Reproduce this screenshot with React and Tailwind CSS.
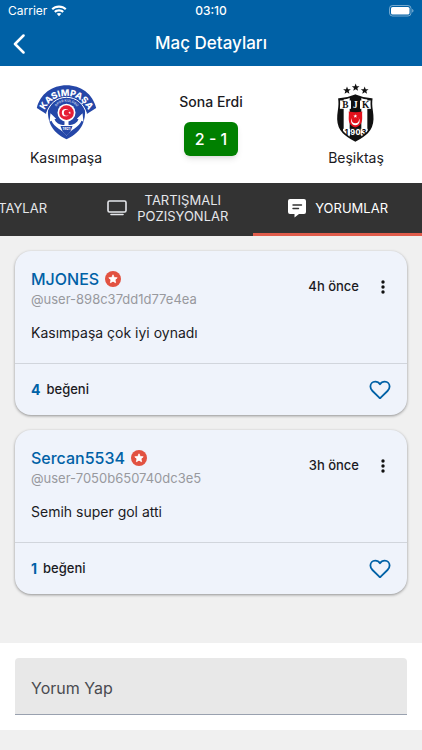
import React, { useState } from "react";

const comments = [
  {
    id: 1,
    name: "MJONES",
    handle: "@user-898c37dd1d77e4ea",
    time: "4h önce",
    text: "Kasımpaşa çok iyi oynadı",
    likes: 4,
  },
  {
    id: 2,
    name: "Sercan5534",
    handle: "@user-7050b650740dc3e5",
    time: "3h önce",
    text: "Semih super gol atti",
    likes: 1,
  },
];

const WifiIcon = () => (
  <svg viewBox="0 0 16 12" className="h-3 w-4" fill="white" aria-hidden="true">
    <path d="M8 0.6C5 .6 2.4 1.7.5 3.5l1.5 1.6C3.600 3.600 5.700 2.800 8 2.800s4.400.800 6 2.300l1.500-1.600C13.600 1.700 11 .6 8 .6z" />
    <path d="M8 4.300c-1.900 0-3.600.7-4.900 1.900l1.500 1.600C5.500 7 6.700 6.500 8 6.500s2.500.5 3.400 1.300l1.500-1.600C11.600 5 9.900 4.300 8 4.300z" />
    <path d="M8 7.900c-.9 0-1.700.3-2.300.9L8 11.200l2.300-2.400C9.700 8.200 8.900 7.900 8 7.900z" />
  </svg>
);

const BatteryIcon = () => (
  <svg viewBox="0 0 25 12" className="h-3 w-[25px]" aria-hidden="true">
    <rect x="0.5" y="0.5" width="21.500" height="10.500" rx="3" fill="none" stroke="white" strokeOpacity="0.45" />
    <rect x="2" y="2" width="18.500" height="7.500" rx="1.600" fill="white" />
    <path d="M23.200 4v3.600c.8-.3 1.300-1 1.300-1.800s-.5-1.500-1.300-1.800z" fill="white" fillOpacity="0.5" />
  </svg>
);

const KasimpasaLogo = () => (
  <svg viewBox="46 38 182 168" className="h-14 w-[61px]" role="img" aria-label="Kasımpaşa">
    <defs>
      <path id="band" d="M65 146A72 72 0 0 1 209 146" />
      <path id="ring" d="M98 130A39 39 0 0 1 176 130" />
    </defs>
    <path
      d="M82 104C78 146 88 180 137 204C186 180 196 146 192 104C182 80 160 72 137 72S92 80 82 104z"
      fill="#2547a8"
    />
    <path
      d="M48 110C58 68 94 42 137 42S216 68 226 110L198 128C190 98 168 76 137 76S84 98 76 128z"
      fill="#2547a8"
    />
    <path d="M77 127C85 98 107 78 137 78S189 98 197 127" fill="none" stroke="white" strokeWidth="3" />
    <path
      d="M86 151L89 126L106 142L101 144C106 157 121 163 131 160V148H143V160C153 163 168 157 173 144L168 142L185 126L188 151L182 148C175 168 149 174 137 193C125 174 99 168 92 148z"
      fill="white"
    />
    <circle cx="137" cy="124" r="27" fill="white" />
    <circle cx="137" cy="124" r="22" fill="#e51e35" />
    <circle cx="134" cy="124" r="11" fill="white" />
    <circle cx="138" cy="124" r="9" fill="#e51e35" />
    <path d="M142 124l8-3-5 7v-8l5 7z" fill="white" />
    <path d="M119 164H155L149 180L137 193L125 180z" fill="#2547a8" />
    <text fill="white" fontFamily="Inter, sans-serif" fontWeight="800" fontSize="27">
      <textPath href="#band" startOffset="50%" textAnchor="middle">
        KASIMPAŞA
      </textPath>
    </text>
    <text fill="#b9c5e6" fontFamily="Inter, sans-serif" fontWeight="700" fontSize="10">
      <textPath href="#ring" startOffset="50%" textAnchor="middle">
        SPOR KULÜBÜ
      </textPath>
    </text>
    <text x="137" y="177" fill="white" fontFamily="Inter, sans-serif" fontWeight="700" fontSize="11" textAnchor="middle">
      1921
    </text>
  </svg>
);

const STAR = "M0-10L2.600-3.400L9.700-3L4.200 1.400L6 8.300L0 4.500L-6 8.300L-4.200 1.400L-9.700-3L-2.600-3.400z";

const BesiktasLogo = () => (
  <svg viewBox="80 36 111 176" className="h-[59px] w-[37px]" role="img" aria-label="Beşiktaş">
    <defs>
      <clipPath id="shield">
        <path d="M86 84Q112 82 135 72Q158 82 184 84C180 106 188 122 187 144C186 180 162 194 135 209C108 194 84 180 83 144C82 122 90 106 86 84z" />
      </clipPath>
    </defs>
    <g fill="#111111">
      <path d={STAR} transform="translate(110 58) scale(1.2)" />
      <path d={STAR} transform="translate(136 49) scale(1.2)" />
      <path d={STAR} transform="translate(163 58) scale(1.2)" />
    </g>
    <g clipPath="url(#shield)">
      <rect x="80" y="70" width="112" height="142" fill="#111111" />
      <rect x="100" y="70" width="18" height="142" fill="white" />
      <rect x="153" y="70" width="18" height="142" fill="white" />
      <rect x="88" y="88" width="94" height="25" fill="white" />
      <rect x="122" y="86" width="27" height="29" fill="#111111" />
      <rect x="98" y="173" width="74" height="19" fill="white" />
      <rect x="119" y="172" width="32" height="22" fill="#111111" />
    </g>
    <path
      d="M86 84Q112 82 135 72Q158 82 184 84C180 106 188 122 187 144C186 180 162 194 135 209C108 194 84 180 83 144C82 122 90 106 86 84z"
      fill="none"
      stroke="#111111"
      strokeWidth="5"
    />
    <path d="M115 121Q135 126 156 121C153 137 164 160 135 169C107 160 118 137 115 121z" fill="#e3111c" />
    <circle cx="135" cy="149" r="13" fill="white" />
    <circle cx="135" cy="145" r="11" fill="#e3111c" />
    <path d={STAR} transform="translate(135 135) scale(0.6)" fill="white" />
    <g fontFamily="Liberation Serif, serif" fontWeight="700" textAnchor="middle">
      <text x="105" y="110" fontSize="28" fill="#111111">B</text>
      <text x="135" y="110" fontSize="28" fill="white">J</text>
      <text x="166" y="110" fontSize="28" fill="#111111">K</text>
    </g>
    <g fontFamily="Inter, sans-serif" fontWeight="800" fontSize="22" textAnchor="middle">
      <text x="108" y="191" fill="#111111">1</text>
      <text x="127" y="191" fill="white">9</text>
      <text x="143" y="191" fill="white">0</text>
      <text x="161" y="191" fill="#111111">3</text>
    </g>
  </svg>
);

const DetailsIcon = () => (
  <svg viewBox="0 0 20 20" className="h-5 w-5 shrink-0" fill="none" stroke="currentColor" strokeWidth="2" aria-hidden="true">
    <path d="M2 4h16M2 10h16M2 16h16" />
  </svg>
);

const ScreenIcon = () => (
  <svg viewBox="0 0 20 18" className="h-[18px] w-5 shrink-0" fill="none" stroke="currentColor" aria-hidden="true">
    <rect x="1" y="2" width="18" height="11" rx="1.500" strokeWidth="1.600" />
    <path d="M4 15.500h12" strokeWidth="1.600" strokeLinecap="round" />
  </svg>
);

const CommentIcon = () => (
  <svg viewBox="0 0 20 20" className="h-5 w-5 shrink-0" aria-hidden="true">
    <path
      d="M3 1h14a2 2 0 0 1 2 2v11a2 2 0 0 1-2 2h-5l-4.500 3.500V16H3a2 2 0 0 1-2-2V3a2 2 0 0 1 2-2z"
      fill="white"
    />
    <path d="M6 7h8.500M6 10.500h5.500" stroke="#333333" strokeWidth="1.400" strokeLinecap="round" />
  </svg>
);

const StarBadge = () => (
  <svg viewBox="0 0 16 16" className="h-4 w-4" aria-hidden="true">
    <circle cx="8" cy="8" r="8" fill="#e25241" />
    <path
      d="M8 3.800L9.200 6.500L12.200 6.800L10 8.800L10.600 11.700L8 10.200L5.400 11.700L6 8.800L3.800 6.800L6.800 6.500z"
      fill="white"
      stroke="white"
      strokeWidth="0.800"
      strokeLinejoin="round"
    />
  </svg>
);

const MoreIcon = () => (
  <svg viewBox="0 0 16 16" className="h-4 w-4" fill="#111111" aria-hidden="true">
    <circle cx="8" cy="3" r="1.700" />
    <circle cx="8" cy="8" r="1.700" />
    <circle cx="8" cy="13" r="1.700" />
  </svg>
);

const HeartIcon = ({ filled }) => (
  <svg
    viewBox="0 0 22 20"
    className="h-5 w-[22px]"
    fill={filled ? "#0061a6" : "none"}
    stroke="#0061a6"
    strokeWidth="1.800"
    strokeLinejoin="round"
    aria-hidden="true"
  >
    <path d="M11 4.300C9.600 1.900 7.600 1.600 6.200 1.600C3.400 1.600 1.400 3.800 1.400 6.600C1.400 8.400 2.300 9.800 3.500 11L10.300 17.700Q11 18.300 11.700 17.700L18.500 11C19.700 9.800 20.600 8.400 20.600 6.600C20.600 3.800 18.600 1.600 15.800 1.600C14.400 1.600 12.400 1.900 11 4.300z" />
  </svg>
);

const Team = ({ name, children }) => (
  <div className="flex w-[100px] flex-col items-center gap-1.5">
    <div className="flex h-[60px] items-center">{children}</div>
    <span className="text-sm">{name}</span>
  </div>
);

const Tab = ({ icon, label, active }) => (
  <button
    type="button"
    role="tab"
    aria-selected={active}
    className={`flex w-2/5 shrink-0 items-center justify-center gap-2 border-b-3 text-[13px] leading-4 ${
      active ? "border-[#e05c4b] text-white" : "border-transparent text-gray-200"
    }`}
  >
    {icon}
    <span className="max-w-24">{label}</span>
  </button>
);

const CommentCard = ({ comment }) => {
  const [liked, setLiked] = useState(false);

  return (
    <article className="rounded-2xl bg-[#eff3fb] shadow-[0_1px_3px_rgba(0,0,0,0.4)]">
      <div className="flex justify-between border-b border-gray-300 px-4 pt-4 pb-5">
        <div>
          <div className="flex h-6 items-center gap-1.5">
            <h2 className="text-base font-medium text-[#0061a6]">{comment.name}</h2>
            <StarBadge />
          </div>
          <p className="text-[13px] leading-4 text-[#98999e]">{comment.handle}</p>
          <p className="mt-4 text-sm">{comment.text}</p>
        </div>
        <div className="flex h-10 items-center gap-4">
          <span className="text-[13px] font-medium">{comment.time}</span>
          <button type="button" aria-label="Seçenekler">
            <MoreIcon />
          </button>
        </div>
      </div>
      <div className="flex h-[51px] items-center justify-between px-4">
        <p className="flex items-center gap-1.5 text-[13px] font-medium">
          <span className="text-sm font-bold text-[#0061a6]">{comment.likes + (liked ? 1 : 0)}</span>
          <span>beğeni</span>
        </p>
        <button type="button" aria-label="Beğen" onClick={() => setLiked(!liked)}>
          <HeartIcon filled={liked} />
        </button>
      </div>
    </article>
  );
};

export default function App() {
  const [draft, setDraft] = useState("");

  return (
    <div className="flex min-h-screen flex-col bg-[#f0f0f0] font-[Inter,sans-serif] text-[#1b1b1f]">
      <header className="bg-[#0061a6] text-white">
        <div className="grid h-[22px] grid-cols-3 items-center px-2 text-xs">
          <div className="flex items-center gap-1">
            <span>Carrier</span>
            <WifiIcon />
          </div>
          <span className="text-center font-medium">03:10</span>
          <div className="flex justify-end">
            <BatteryIcon />
          </div>
        </div>
        <div className="grid h-11 grid-cols-[40px_1fr_40px] items-center">
          <button type="button" aria-label="Geri" className="flex h-full items-center pl-3">
            <svg viewBox="0 0 14 20" className="h-5 w-3.5" fill="none" stroke="white" strokeWidth="2.500" strokeLinecap="round" strokeLinejoin="round" aria-hidden="true">
              <path d="M11.500 1.500L3 10l8.500 8.500" />
            </svg>
          </button>
          <h1 className="text-center text-[17px] font-medium">Maç Detayları</h1>
        </div>
      </header>

      <section className="flex justify-between bg-white px-4 pt-4 pb-[15px]">
        <Team name="Kasımpaşa">
          <KasimpasaLogo />
        </Team>
        <div className="flex flex-col items-center gap-2.5 pt-2.5">
          <span className="text-sm font-medium">Sona Erdi</span>
          <span className="rounded-md bg-[#008000] px-[11px] py-[5px] text-base font-medium text-white shadow-md">2 - 1</span>
        </div>
        <Team name="Beşiktaş">
          <BesiktasLogo />
        </Team>
      </section>

      <nav role="tablist" className="flex h-[53px] justify-end overflow-hidden bg-[#333333]">
        <Tab icon={<DetailsIcon />} label="DETAYLAR" />
        <Tab icon={<ScreenIcon />} label="TARTIŞMALI POZISYONLAR" />
        <Tab icon={<CommentIcon />} label="YORUMLAR" active />
      </nav>

      <main className="flex flex-1 flex-col gap-[15px] p-[15px]">
        {comments.map((comment) => (
          <CommentCard key={comment.id} comment={comment} />
        ))}
      </main>

      <form className="mb-5 bg-white p-[15px]" onSubmit={(e) => e.preventDefault()}>
        <input
          type="text"
          aria-label="Yorum Yap"
          placeholder="Yorum Yap"
          value={draft}
          onChange={(e) => setDraft(e.target.value)}
          className="block h-[57px] w-full rounded-t border-b border-gray-400 bg-[#e8e8e8] px-4 pt-1 text-base outline-none placeholder:text-[#4a4b50]"
        />
      </form>
    </div>
  );
}
